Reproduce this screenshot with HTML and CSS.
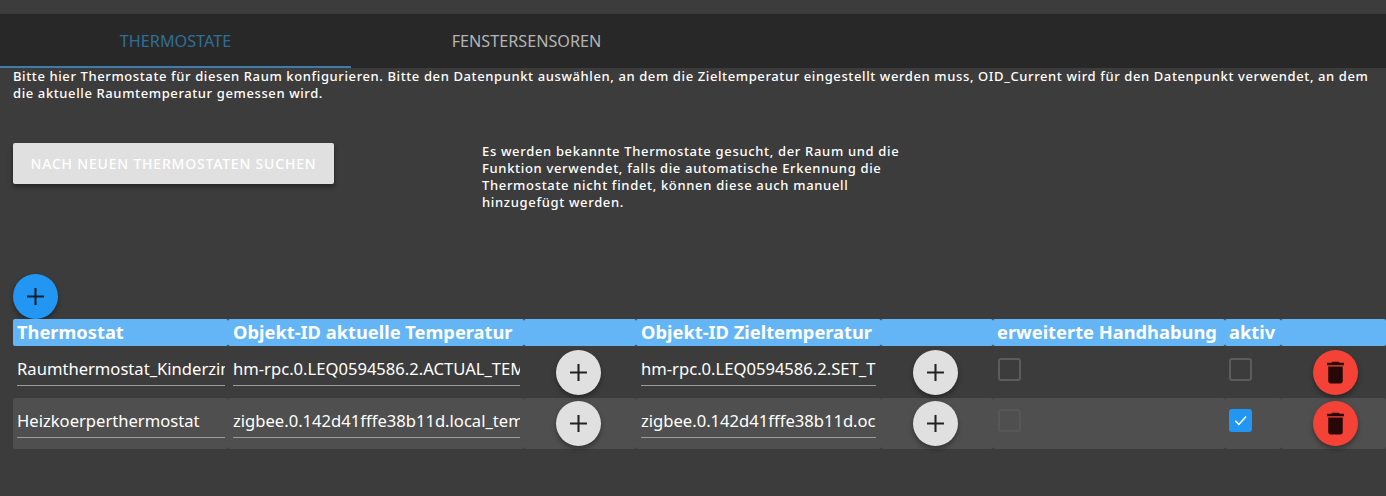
FILE: index.html
```html
<!DOCTYPE html>
<html lang="de">
<head>
    <meta charset="UTF-8">
    <title>Thermostate</title>
    <link rel="stylesheet" href="styles.css">
</head>
<body>

    <div class="tabs">
        <div class="tab tab-active">Thermostate</div>
        <div class="tab">Fenstersensoren</div>
    </div>

    <div class="content">
        <p class="intro">Bitte hier Thermostate für diesen Raum konfigurieren. Bitte den Datenpunkt auswählen, an dem die Zieltemperatur eingestellt werden muss, OID_Current wird für den Datenpunkt verwendet, an dem die aktuelle Raumtemperatur gemessen wird.</p>

        <div class="search-row">
            <button type="button" class="search-button">Nach neuen Thermostaten suchen</button>
            <p class="search-help">Es werden bekannte Thermostate gesucht, der Raum und die Funktion verwendet, falls die automatische Erkennung die Thermostate nicht findet, können diese auch manuell hinzugefügt werden.</p>
        </div>

        <button type="button" class="fab fab-blue add-button">
            <svg viewBox="0 0 24 24"><path d="M19 12.850h-6.150V19h-1.700v-6.150H5v-1.700h6.150V5h1.700v6.150H19z"/></svg>
        </button>

        <table class="grid">
            <colgroup>
                <col class="c-name"><col class="c-oid"><col class="c-btn"><col class="c-oid2"><col class="c-btn"><col class="c-ext"><col class="c-act"><col class="c-del">
            </colgroup>
            <thead>
                <tr>
                    <th>Thermostat</th>
                    <th>Objekt-ID aktuelle Temperatur</th>
                    <th></th>
                    <th>Objekt-ID Zieltemperatur</th>
                    <th></th>
                    <th>erweiterte Handhabung</th>
                    <th>aktiv</th>
                    <th></th>
                </tr>
            </thead>
            <tbody>
                <tr class="row-first">
                    <td><input class="field" type="text" value="Raumthermostat_Kinderzimmer"></td>
                    <td><input class="field" type="text" value="hm-rpc.0.LEQ0594586.2.ACTUAL_TEMPERATURE"></td>
                    <td class="btn-cell"><button type="button" class="fab fab-grey"><svg viewBox="0 0 24 24"><path d="M19 12.850h-6.150V19h-1.700v-6.150H5v-1.700h6.150V5h1.700v6.150H19z"/></svg></button></td>
                    <td><input class="field" type="text" value="hm-rpc.0.LEQ0594586.2.SET_TEMPERATURE"></td>
                    <td class="btn-cell"><button type="button" class="fab fab-grey"><svg viewBox="0 0 24 24"><path d="M19 12.850h-6.150V19h-1.700v-6.150H5v-1.700h6.150V5h1.700v6.150H19z"/></svg></button></td>
                    <td><span class="check check-ext"></span></td>
                    <td><span class="check"></span></td>
                    <td class="btn-cell"><button type="button" class="fab fab-red"><svg viewBox="0 0 24 24"><path d="M6 19c0 1.100.9 2 2 2h8c1.100 0 2-.9 2-2V7H6v12zM19 4h-3.500l-1-1h-5l-1 1H5v2h14V4z"/></svg></button></td>
                </tr>
                <tr class="row-alt">
                    <td><input class="field" type="text" value="Heizkoerperthermostat"></td>
                    <td><input class="field" type="text" value="zigbee.0.142d41fffe38b11d.local_temperature"></td>
                    <td class="btn-cell"><button type="button" class="fab fab-grey"><svg viewBox="0 0 24 24"><path d="M19 12.850h-6.150V19h-1.700v-6.150H5v-1.700h6.150V5h1.700v6.150H19z"/></svg></button></td>
                    <td><input class="field" type="text" value="zigbee.0.142d41fffe38b11d.occupied_heating_setpoint"></td>
                    <td class="btn-cell"><button type="button" class="fab fab-grey"><svg viewBox="0 0 24 24"><path d="M19 12.850h-6.150V19h-1.700v-6.150H5v-1.700h6.150V5h1.700v6.150H19z"/></svg></button></td>
                    <td><span class="check check-ext check-disabled"></span></td>
                    <td><span class="check check-on"><svg viewBox="0 0 24 24"><path d="M5.500 12.500l4.500 4.500 9-10" fill="none" stroke="#fff" stroke-width="2"/></svg></span></td>
                    <td class="btn-cell"><button type="button" class="fab fab-red"><svg viewBox="0 0 24 24"><path d="M6 19c0 1.100.9 2 2 2h8c1.100 0 2-.9 2-2V7H6v12zM19 4h-3.500l-1-1h-5l-1 1H5v2h14V4z"/></svg></button></td>
                </tr>
            </tbody>
        </table>
    </div>

</body>
</html>
```

FILE: styles.css
```css
html, body {
    height: 100%;
}
body {
    margin: 0;
    padding-top: 14px;
    box-sizing: border-box;
    background-color: #3c3c3c;
    color: #fff;
    font-family: "Noto Sans", sans-serif;
    overflow: hidden;
}
.tabs {
    display: flex;
    height: 54px;
    background-color: #282828;
}
.tab {
    width: 351px;
    box-sizing: border-box;
    padding-top: 18px;
    text-align: center;
    font-size: 16.200px;
    line-height: 18px;
    text-transform: uppercase;
    color: #b4b4b4;
}
.tab-active {
    color: #2f6f97;
    border-bottom: 2px solid #3f7cab;
}
.content {
    padding-left: 13px;
}
.intro {
    margin: 0;
    height: 75px;
    font-size: 13px;
    line-height: 17px;
    font-weight: 500;
    letter-spacing: 0.61px;
}
.search-row {
    display: flex;
    align-items: flex-start;
    height: 131px;
}
.search-button {
    width: 321px;
    height: 41px;
    border: none;
    border-radius: 2px;
    background-color: #e0e0e0;
    color: #fff;
    font-family: inherit;
    font-size: 14px;
    font-weight: 500;
    letter-spacing: 0.8px;
    text-transform: uppercase;
    box-shadow: 0 3px 5px rgba(0, 0, 0, 0.4);
}
.search-help {
    margin: 0 0 0 148px;
    width: 430px;
    font-size: 13px;
    line-height: 17px;
    font-weight: 500;
    letter-spacing: 0.67px;
}
.fab {
    display: inline-flex;
    align-items: center;
    justify-content: center;
    width: 45px;
    height: 45px;
    padding: 0;
    border: none;
    border-radius: 50%;
    box-shadow: 0 3px 5px rgba(0, 0, 0, 0.35);
}
.fab svg {
    width: 29px;
    height: 29px;
    fill: #222;
}
.fab-blue {
    display: flex;
    background-color: #2196f3;
}
.fab-blue svg {
    fill: #0c1f2e;
}
.fab-grey {
    background-color: #e0e0e0;
}
.fab-red {
    background-color: #f44336;
}
.fab-red svg {
    fill: #260808;
}
.grid {
    width: 1373px;
    table-layout: fixed;
    border-collapse: collapse;
}
.c-name { width: 215px; }
.c-oid { width: 296px; }
.c-btn { width: 112px; }
.c-oid2 { width: 245px; }
.c-ext { width: 232px; }
.c-act { width: 56px; }
.grid th {
    height: 25px;
    padding: 0 4px 2px;
    border-radius: 2px;
    background-color: #64b5f6;
    text-align: left;
    font-size: 18.300px;
    font-weight: 700;
    white-space: nowrap;
    overflow: hidden;
}
.grid th:nth-child(2),
.grid th:nth-child(4) {
    padding-left: 5px;
}
.grid td {
    height: 51px;
    padding: 0 4px 0 5px;
}
.row-first td {
    height: 52px;
}
.grid td:first-child {
    padding: 0 3px 0 4px;
}
.grid td:nth-child(4) {
    padding-right: 5px;
}
.grid td:nth-child(6),
.grid td:nth-child(7) {
    padding-left: 4px;
}
.row-alt td {
    border-radius: 2px;
    background-color: #4f4f4f;
}
.grid td.btn-cell {
    padding: 0 0 0 32px;
}
.field {
    display: block;
    width: 100%;
    box-sizing: border-box;
    height: 34px;
    margin-top: -6px;
    padding: 0;
    border: none;
    border-bottom: 1px solid #9c9c9c;
    background: transparent;
    color: #fff;
    font-family: inherit;
    font-size: 16.600px;
}
.check {
    display: block;
    width: 19px;
    height: 19px;
    margin-top: -6px;
    border: 2px solid #5c5c5c;
    border-radius: 3px;
}
.check-ext {
    margin-left: 1px;
}
.check-disabled {
    border-color: #575757;
}
.check-on {
    border-color: #2196f3;
    background-color: #2196f3;
}
.check-on svg {
    display: block;
    width: 19px;
    height: 19px;
}
```
